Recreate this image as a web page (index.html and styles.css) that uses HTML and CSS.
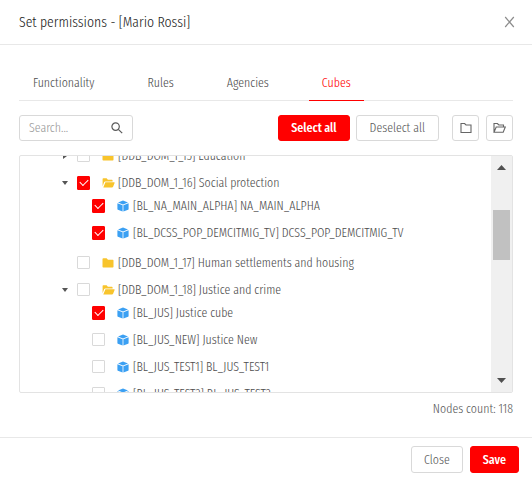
FILE: index.html
```html
<!DOCTYPE html>
<html lang="en">
<head>
<meta charset="utf-8">
<title>Set permissions</title>
<link rel="stylesheet" href="styles.css">
</head>
<body>
<svg class="defs" aria-hidden="true">
  <symbol id="folder" viewBox="0 0 12 12"><path d="M0.5 2.2Q.5 1.2 1.3 1.2H4.6L6 2.7H10.8Q11.5 2.7 11.5 3.5V9.8Q11.5 10.6 10.8 10.6H1.3Q.5 10.6.5 9.8Z"/></symbol>
  <symbol id="folder-open" viewBox="0 0 13 12"><path d="M.6 9.2V2Q.6 1.3 1.3 1.3H4.6L5.9 2.7H9.9Q10.6 2.7 10.6 3.4V4.4H3.3Q2.5 4.4 2.2 5.1Z M3.4 5.3H12.2Q12.8 5.3 12.6 5.9L11.1 9.7Q10.8 10.5 10 10.5H1.3Z"/></symbol>
  <symbol id="cube" viewBox="0 0 12 12"><path d="M6 .4 11 2.4 6 4.5 1 2.4Z M.4 3.2 5.6 5.3V11.6L.9 9.7Q.4 9.5.4 9Z M11.6 3.2 6.4 5.3V11.6L11.1 9.7Q11.6 9.5 11.6 9Z"/></symbol>
</svg>
<main class="dialog">
  <header class="dialog-header">
    <h1>Set permissions - [Mario Rossi]</h1>
    <button class="dismiss" type="button" aria-label="Dismiss"><svg width="11" height="12" viewBox="0 0 11 12"><path d="M1.2 1 9.8 11M9.8 1 1.2 11"/></svg></button>
  </header>
  <div class="dialog-body">
    <nav class="tabs">
      <a href="#functionality">Functionality</a>
      <a href="#rules">Rules</a>
      <a href="#agencies">Agencies</a>
      <a href="#cubes" class="active">Cubes</a>
    </nav>
    <div class="toolbar">
      <div class="search">
        <input type="text" placeholder="Search..." aria-label="Search">
        <svg width="12" height="12" viewBox="0 0 12 12"><circle cx="4.6" cy="4.6" r="3.7"/><path d="M7.3 7.3 11.2 11.2"/></svg>
      </div>
      <div class="actions">
        <button class="btn primary" type="button">Select all</button>
        <button class="btn" type="button">Deselect all</button>
      </div>
      <div class="icon-actions">
        <button class="btn icon" type="button" aria-label="Collapse all"><svg width="12" height="12" viewBox="0 0 12 12"><path d="M1 1.5H4.6L6 3H11V10.5H1Z"/></svg></button>
        <button class="btn icon" type="button" aria-label="Expand all"><svg width="13" height="12" viewBox="0 0 13 12"><path d="M1 10.3V1.5H4.4L5.8 3H10.5V5M1 10.3 3.2 5H12.3L10.2 10.3Z"/></svg></button>
      </div>
    </div>
    <div class="tree-box">
      <div class="tree-view">
        <ul class="tree">
          <li><div class="row"><span class="caret closed"></span><label><input type="checkbox"><svg class="folder"><use href="#folder"/></svg><span>[DDB_DOM_1_15] Education</span></label></div></li>
          <li><div class="row"><span class="caret"></span><label><input type="checkbox" checked><svg class="folder open"><use href="#folder-open"/></svg><span>[DDB_DOM_1_16] Social protection</span></label></div>
            <ul>
              <li class="row"><label><input type="checkbox" checked><svg class="cube"><use href="#cube"/></svg><span>[BL_NA_MAIN_ALPHA] NA_MAIN_ALPHA</span></label></li>
              <li class="row"><label><input type="checkbox" checked><svg class="cube"><use href="#cube"/></svg><span>[BL_DCSS_POP_DEMCITMIG_TV] DCSS_POP_DEMCITMIG_TV</span></label></li>
            </ul>
          </li>
          <li><div class="row"><span class="caret none"></span><label><input type="checkbox"><svg class="folder"><use href="#folder"/></svg><span>[DDB_DOM_1_17] Human settlements and housing</span></label></div></li>
          <li><div class="row"><span class="caret"></span><label><input type="checkbox"><svg class="folder open"><use href="#folder-open"/></svg><span>[DDB_DOM_1_18] Justice and crime</span></label></div>
            <ul>
              <li class="row"><label><input type="checkbox" checked><svg class="cube"><use href="#cube"/></svg><span>[BL_JUS] Justice cube</span></label></li>
              <li class="row"><label><input type="checkbox"><svg class="cube"><use href="#cube"/></svg><span>[BL_JUS_NEW] Justice New</span></label></li>
              <li class="row"><label><input type="checkbox"><svg class="cube"><use href="#cube"/></svg><span>[BL_JUS_TEST1] BL_JUS_TEST1</span></label></li>
              <li class="row"><label><input type="checkbox"><svg class="cube"><use href="#cube"/></svg><span>[BL_JUS_TEST2] BL_JUS_TEST2</span></label></li>
            </ul>
          </li>
        </ul>
      </div>
      <div class="scrollbar" aria-hidden="true">
        <svg width="9" height="5" viewBox="0 0 9 5"><path d="M0 5 4.5 0 9 5Z"/></svg>
        <span class="thumb"></span>
        <svg width="9" height="5" viewBox="0 0 9 5"><path d="M0 0H9L4.5 5Z"/></svg>
      </div>
    </div>
    <p class="count">Nodes count: 118</p>
  </div>
  <footer class="dialog-footer">
    <button class="btn" type="button">Close</button>
    <button class="btn primary" type="button">Save</button>
  </footer>
</main>
</body>
</html>
```
FILE: styles.css
```css
* { box-sizing: border-box; }

body {
  margin: 0;
  background: #fff;
  color: #4d4d4d;
  font: 300 13px/20px "Fira Sans Extra Condensed", "Liberation Sans Narrow", "Arial Narrow", "Open Sans", sans-serif;
}

button, input { font: inherit; color: inherit; }
a { color: inherit; text-decoration: none; }
ul { list-style: none; margin: 0; padding: 0; }
.defs { position: absolute; width: 0; height: 0; }

.dialog { display: flex; flex-direction: column; height: 100vh; }

.dialog-header {
  display: flex;
  align-items: center;
  justify-content: space-between;
  padding: 10px 17px 10px 19px;
  border-bottom: 1px solid #e8e8e8;
}
.dialog-header h1 { margin: 0; font-size: 15px; line-height: 24px; font-weight: 300; color: #1f1f1f; }

.dismiss { display: flex; padding: 0; border: 0; background: none; }
.dismiss svg { fill: none; stroke: #8c8c8c; stroke-width: 1.2; }

.dialog-body {
  flex: 1;
  min-height: 0;
  display: flex;
  flex-direction: column;
  padding: 20px 19px 18px;
}

.tabs { display: flex; gap: 27px; padding-left: 1px; border-bottom: 1px solid #e8e8e8; }
.tabs a { padding: 8px 13px 7px; margin-bottom: -1px; border-bottom: 1px solid transparent; }
.tabs .active { color: #f00; border-bottom-color: #f00; }

.toolbar { display: flex; margin: 14px 0; }
.search {
  display: flex;
  align-items: center;
  width: 114px;
  height: 26px;
  margin-right: auto;
  padding: 0 9px;
  border: 1px solid #d9d9d9;
  border-radius: 3px;
}
.search input { flex: 1; min-width: 0; padding: 0; border: 0; outline: 0; background: none; }
.search input::placeholder { color: #999; opacity: 1; }
.search svg { fill: none; stroke: #595959; stroke-width: 1.2; }

.actions { display: flex; gap: 6px; margin-right: 13px; }
.icon-actions { display: flex; gap: 7px; }
.btn {
  height: 26px;
  padding: 0 13px;
  border: 1px solid #d9d9d9;
  border-radius: 3px;
  background: #fff;
  color: #595959;
  line-height: 22px;
}
.btn.primary { padding: 0 12px; border-color: #f00; background: #f00; color: #fff; font-weight: 500; }
.btn.icon { display: flex; align-items: center; justify-content: center; width: 27px; padding: 0; }
.btn.icon svg { fill: none; stroke: #666; stroke-width: 1.1; }

.tree-box {
  flex: 1;
  min-height: 0;
  display: flex;
  border: 1px solid #e3e3e3;
  border-radius: 2px;
}
.tree-view { flex: 1; overflow: hidden; }
.tree { margin-top: -14px; padding-left: 40px; }
.tree ul { margin: -4px 0 3px; padding-left: 32px; }
.row { display: flex; align-items: center; height: 27px; white-space: nowrap; }
.row label { display: flex; align-items: center; }

.caret { width: 6px; margin: 0 10px 0 2px; border: solid transparent; border-width: 4px 3px 0; border-top-color: #555; }
.caret.closed { width: 4px; margin: 0 11px 0 3px; border-width: 3px 0 3px 4px; border-color: transparent transparent transparent #555; }
.caret.none { border-color: transparent; }

.row input {
  appearance: none;
  display: grid;
  place-items: center;
  width: 13px;
  height: 13px;
  margin: 0 12px 0 0;
  border: 1px solid #d9d9d9;
  border-radius: 1px;
  background: #fff;
}
.tree > li > .row input { margin-left: -1px; }
.row input:checked { height: 14px; border-color: #f00; background: #f00; }
.row input:checked::after {
  content: "";
  width: 7px;
  height: 4px;
  margin-top: -2px;
  border: solid #fff;
  border-width: 0 0 1px 1px;
  transform: rotate(-45deg);
}
.row svg { width: 12px; height: 12px; margin-right: 4px; }
.row .open { width: 13px; margin-right: 3px; }
.folder { fill: #f8c42c; }
.cube { fill: #3ba0f3; }

.scrollbar {
  display: flex;
  flex-direction: column;
  align-items: center;
  width: 21px;
  padding: 9px 0;
  background: #f0f0f0;
}
.scrollbar svg { fill: #505050; }
.thumb { width: 17px; height: 50px; margin: 40px 0 auto; background: #c1c1c1; }

.count { margin: 6px 0 0; text-align: right; color: #595959; }

.dialog-footer {
  display: flex;
  justify-content: flex-end;
  gap: 7px;
  padding: 8px 13px;
  border-top: 1px solid #e8e8e8;
}
.dialog-footer .btn { height: 27px; padding: 0 12px; }
```
